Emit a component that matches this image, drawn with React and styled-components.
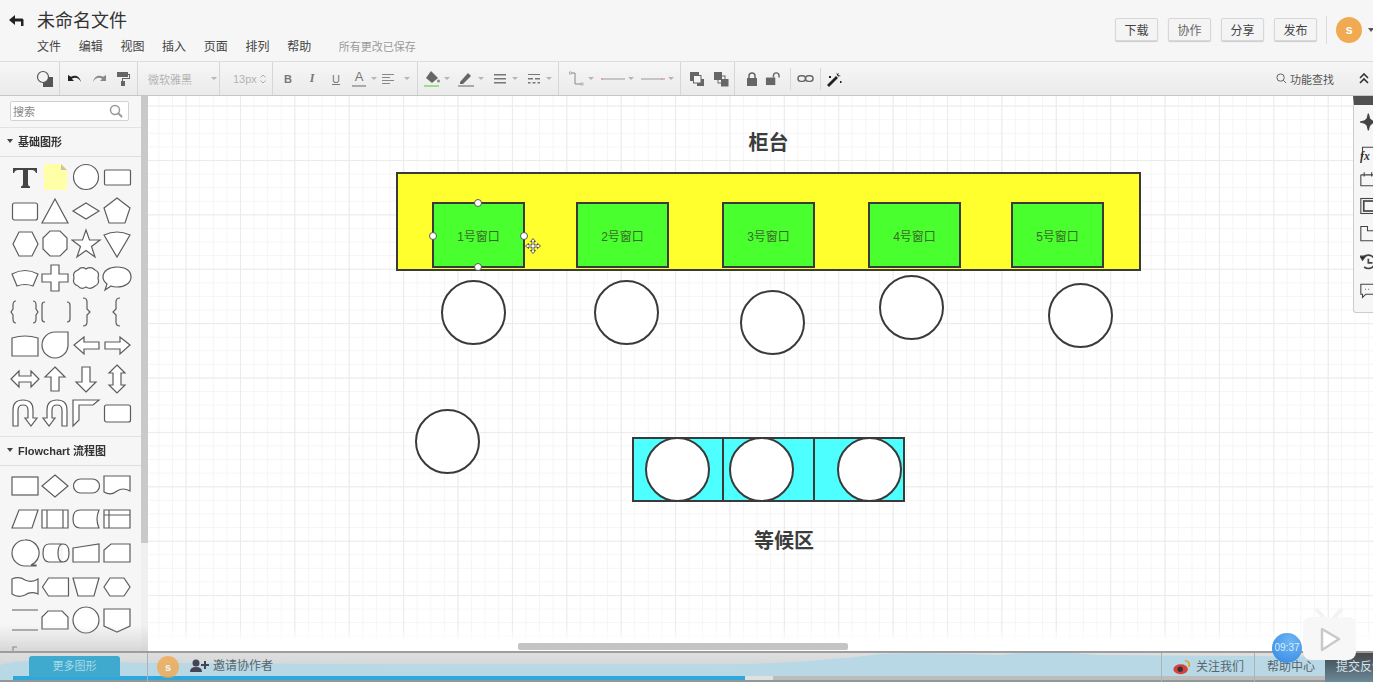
import React from 'react'
import styled, { createGlobalStyle } from 'styled-components'

const CJK = `"Liberation Sans", "Noto Sans CJK SC", sans-serif`

const Global = createGlobalStyle`
  html, body { margin: 0; padding: 0; background: #fff; }
  * { box-sizing: border-box; }
  body { font-family: ${CJK}; }
`

const Page = styled.div`
  position: relative;
  width: 1373px;
  height: 682px;
  overflow: hidden;
  display: flex;
  flex-direction: column;
  filter: blur(0.45px);
`

/* header */
const Header = styled.header`
  height: 62px;
  flex: none;
  display: flex;
  justify-content: space-between;
  background: #f6f6f6;
  border-bottom: 1px solid #dcdcdc;
`
const HeaderLeft = styled.div`
  display: flex;
  padding: 8px 0 0 9px;
`
const Back = styled.svg`
  width: 15px;
  height: 11px;
  margin: 7px 13px 0 0;
`
const Title = styled.div`
  font-size: 18px;
  line-height: 26px;
  color: #333;
`
const MenuBar = styled.nav`
  display: flex;
  align-items: center;
  margin-top: 5px;
  font-size: 12px;
  line-height: 16px;
  color: #444;
`
const MenuItem = styled.span`
  width: 41.7px;
`
const Saved = styled.span`
  margin-left: 8px;
  font-size: 11px;
  color: #9a9a9a;
  padding-left: 2px;
`
const HeaderRight = styled.div`
  display: flex;
  align-items: center;
  padding: 0 0 2px 0;
`
const Btn = styled.button`
  width: 43px;
  height: 23px;
  margin-right: 10px;
  padding: 0;
  font: 12px ${CJK};
  color: ${p => p.$color || '#444'};
  background: #f4f4f4;
  border: 1px solid #d8d8d8;
  border-radius: 2px;
  box-shadow: 0 1px 1px #ccc;
`
const VSep = styled.div`
  width: 1px;
  height: 28px;
  background: #ddd;
  margin: 0 9px 0 -1px;
`
const Avatar = styled.div`
  width: ${p => p.$d}px;
  height: ${p => p.$d}px;
  border-radius: 50%;
  flex: none;
  background: #f2aa52;
  color: #fff;
  font-size: ${p => p.$d * 0.5}px;
  font-weight: 700;
  text-align: center;
  line-height: ${p => p.$d}px;
  opacity: ${p => p.$fade || 1};
`
const AvatarCaret = styled.div`
  width: 0;
  height: 0;
  margin-left: 6px;
  margin-right: -1px;
  border: 3.5px solid transparent;
  border-top: 4px solid #555;
  border-bottom: 0;
`

/* toolbar */
const Toolbar = styled.div`
  height: 34px;
  flex: none;
  display: flex;
  align-items: stretch;
  background: linear-gradient(#f6f6f6, #ebebeb);
  border-bottom: 1px solid #c6c6c6;
`
const Group = styled.div`
  width: ${p => p.$w}px;
  flex: none;
  display: flex;
  align-items: center;
  gap: ${p => p.$gap || 0}px;
  padding-left: ${p => p.$pl || 0}px;
  border-right: ${p => (p.$open ? 'none' : '1px solid #d6d6d6')};
`
const Tool = styled.div`
  width: ${p => p.$w || 24}px;
  height: 24px;
  flex: none;
  display: flex;
  align-items: center;
  justify-content: center;
  font: ${p => p.$font || '700 11px "Liberation Sans", sans-serif'};
  font-style: ${p => (p.$italic ? 'italic' : 'normal')};
  text-decoration: ${p => (p.$under ? 'underline' : 'none')};
  color: #777;
`
const Caret = styled.div`
  width: 8px;
  flex: none;
  margin-left: ${p => p.$ml || 0}px;
  display: flex;
  justify-content: center;
  &::after {
    content: '';
    border: 3px solid transparent;
    border-top: 3px solid #b5b5b5;
    border-bottom: 0;
  }
`
const Pair = styled.div`
  display: flex;
  align-items: center;
`
const FontName = styled.span`
  width: 62px;
  margin-left: 10px;
  font-size: 11px;
  color: #b4b4b4;
`
const FontSize = styled.span`
  margin-left: 13px;
  width: 27px;
  font: 11px "Liberation Sans", sans-serif;
  color: #b4b4b4;
`
const Spinner = styled.svg`
  width: 6px;
  height: 10px;
`
const Rule = styled.div`
  width: 1px;
  height: 22px;
  flex: none;
  margin: 0 ${p => p.$mr || 2}px 0 ${p => p.$ml || 7}px;
  background: #d8d8d8;
`
const FindBar = styled.div`
  flex: 1;
  display: flex;
  align-items: center;
  justify-content: flex-end;
  padding-right: 3px;
  font-size: 11px;
  color: #555;
`
const Collapse = styled.svg`
  width: 12px;
  height: 11px;
  margin-left: 24px;
`
const FindIcon = styled.svg`
  width: 11px;
  height: 11px;
  margin-right: 3px;
`
const UnderA = styled.span`
  border-bottom: 2px solid #aaa;
  padding: 0 3px 1px;
  font-weight: 400;
  font-size: 13px;
  line-height: 14px;
`

/* main */
const Main = styled.div`
  flex: 1;
  min-height: 0;
  display: flex;
`
const Sidebar = styled.aside`
  position: relative;
  height: 100%;
  width: 148px;
  flex: none;
  overflow: hidden;
  background: #f6f6f6;
  border-right: 7px solid #f0f0f0;
`
const SideScroll = styled.div`
  position: absolute;
  z-index: 2;
  left: 141px;
  top: 0;
  width: 7px;
  height: 447px;
  background: #c9c9c9;
`
const SideWrap = styled.div`
  position: relative;
  width: 148px;
  flex: none;
`
const SearchBox = styled.div`
  height: 31px;
  padding: 5px 0 0 10px;
`
const SearchField = styled.div`
  width: 119px;
  height: 20px;
  display: flex;
  align-items: center;
  justify-content: space-between;
  padding: 0 5px 0 2px;
  background: #fff;
  border: 1px solid #d2d2d2;
  border-radius: 2px;
  font-size: 11px;
  color: #888;
`
const SectionHead = styled.div`
  height: 30px;
  display: flex;
  align-items: center;
  gap: 5px;
  padding: 0 0 2px 7px;
  border-top: 1px solid #e2e2e2;
  border-bottom: 1px solid #dedede;
  font: 700 11px ${CJK};
  color: #333;
  &::before {
    content: '';
    border: 3px solid transparent;
    border-top: 4px solid #444;
    border-bottom: 0;
  }
`
const Shapes = styled.div`
  display: grid;
  grid-template-columns: repeat(4, 30.8px);
  grid-auto-rows: 33.7px;
  padding: 3px 0 6px 9.5px;
`
const Cell = styled.svg`
  width: 30.8px;
  height: 33.7px;
  fill: ${p => (p.$bare ? 'none' : '#fff')};
  stroke: ${p => (p.$bare ? 'none' : '#5c5c5c')};
  stroke-width: 1.2;
`
const SideFade = styled.div`
  position: absolute;
  z-index: 3;
  left: 0;
  right: 0;
  bottom: 0;
  height: 26px;
  background: linear-gradient(rgba(200, 200, 200, 0), rgba(190, 190, 190, 0.55));
`

/* canvas */
const Canvas = styled.main`
  position: relative;
  flex: 1;
  overflow: hidden;
  background-color: #fff;
  background-image:
    linear-gradient(#ebebeb 1px, transparent 1px),
    linear-gradient(90deg, #ebebeb 1px, transparent 1px),
    linear-gradient(#f5f5f5 1px, transparent 1px),
    linear-gradient(90deg, #f5f5f5 1px, transparent 1px);
  background-size: 54.4px 54.4px, 54.4px 54.4px, 13.6px 13.6px, 13.6px 13.6px;
  background-position: 0 9.6px, 37.6px 0, 0 9.6px, 37.6px 0;
`
const CanvasFade = styled.div`
  position: absolute;
  left: 0;
  right: 0;
  bottom: 0;
  height: 24px;
  background: linear-gradient(rgba(255, 255, 255, 0), #fff 65%);
`
const Shape = styled.div`
  position: absolute;
  left: ${p => p.$x - 148}px;
  top: ${p => p.$y - 96}px;
  width: ${p => p.$w}px;
  height: ${p => p.$h}px;
  display: flex;
  align-items: center;
  justify-content: center;
  background: ${p => p.$bg};
  border: 2px solid #3a3a3a;
  border-radius: ${p => (p.$round ? '50%' : '0')};
  font-size: 12px;
  color: #3a6a2a;
`
const Label = styled.div`
  position: absolute;
  left: ${p => p.$x - 148}px;
  top: ${p => p.$y - 96}px;
  transform: translate(-50%, -50%);
  font: 700 20px ${CJK};
  color: #3c3c3c;
  white-space: nowrap;
`
const Handle = styled.div`
  position: absolute;
  left: ${p => p.$x - 148 - 4}px;
  top: ${p => p.$y - 96 - 4}px;
  width: 8px;
  height: 8px;
  background: #fff;
  border: 1px solid #555;
  border-radius: 50%;
`
const MoveCursor = styled.svg`
  position: absolute;
  left: ${533 - 148 - 8}px;
  top: ${246 - 96 - 8}px;
  width: 16px;
  height: 16px;
`
const HScroll = styled.div`
  position: absolute;
  left: ${518 - 148}px;
  bottom: 1px;
  width: 330px;
  height: 7px;
  border-radius: 2px;
  background: #c4c4c4;
`
const RightPanel = styled.div`
  position: absolute;
  right: 0;
  top: 0;
  width: 20px;
  height: 217px;
  background: #f6f6f6;
  border-left: 1px solid #ccc;
  border-bottom: 1px solid #ccc;
  border-bottom-left-radius: 3px;
  border-top: 9px solid #505050;
  display: flex;
  flex-direction: column;
  padding: 7px 0 0 6px;
  overflow: hidden;
`
const PanelIcon = styled.svg`
  width: 20px;
  height: 20px;
  flex: none;
  margin-bottom: ${p => p.$mb}px;
  fill: none;
  stroke: #444;
  stroke-width: 1.3;
`

/* footer */
const Footer = styled.footer`
  position: relative;
  height: 31px;
  flex: none;
  display: flex;
  overflow: hidden;
  border-top: 2px solid #9d9d9d;
  background: linear-gradient(#dedede, #d4d8da 40%, #c8d4d8);
`
const Wave = styled.svg`
  position: absolute;
  left: 0;
  top: 0;
  width: 1373px;
  height: 29px;
`
const Progress = styled.div`
  position: absolute;
  left: 0;
  top: 23px;
  width: 100%;
  height: 6px;
  background: linear-gradient(90deg, transparent 13px, #bcbcbc 13px, #bcbcbc 100%);
  border-bottom: 2px solid #8f9a96;
  &::before {
    content: '';
    position: absolute;
    left: 745px;
    width: 28px;
    height: 4px;
    background: #e0e0e0;
  }
  &::after {
    content: '';
    position: absolute;
    left: 13px;
    width: 732px;
    height: 4px;
    background: #2fa6dc;
  }
`
const FootCell = styled.div`
  position: relative;
  width: ${p => p.$w}px;
  flex: ${p => (p.$grow ? 1 : 'none')};
  height: 100%;
  display: flex;
  align-items: flex-start;
  padding: ${p => p.$pad || '4px 0 0 0'};
  gap: ${p => p.$gap || 0}px;
  border-right: 1px solid ${p => (p.$noline ? 'transparent' : '#a9b4b8')};
  font-size: 12px;
  line-height: 20px;
  color: #56666e;
`
const MoreBtn = styled.div`
  width: 91px;
  height: 21px;
  margin: -1px 0 0 29px;
  background: #3fa9ce;
  border-radius: 3px 3px 0 0;
  color: #a9dbe8;
  font-size: 11px;
  line-height: 21px;
  text-align: center;
`
const InviteText = styled.span`
  margin-left: -6px;
`
const Feedback = styled.div`
  position: relative;
  width: 48px;
  height: 100%;
  flex: none;
  padding: 4px 0 0 11px;
  background: linear-gradient(#4a4a4a, #50606a 40%, #6c8a98);
  color: #d6e2e8;
  font-size: 12px;
  line-height: 20px;
  white-space: nowrap;
  overflow: hidden;
`
const Clock = styled.div`
  position: absolute;
  left: 1272px;
  top: 633px;
  width: 30px;
  height: 30px;
  border-radius: 50%;
  background: radial-gradient(circle at 60% 30%, #6fb6f4, #2f86e6);
  color: #dcecfb;
  font: 10px/30px "Liberation Sans", sans-serif;
  text-align: center;
`
const PlayBadge = styled.svg`
  position: absolute;
  left: 1300px;
  top: 606px;
  width: 58px;
  height: 56px;
`

const Ic = styled.svg`
  width: ${p => p.$s || 16}px;
  height: ${p => p.$s || 16}px;
  margin-top: ${p => p.$mt || 0}px;
  flex: none;
  fill: ${p => p.$fill || '#666'};
  stroke: none;
`

const menus = ['文件', '编辑', '视图', '插入', '页面', '排列', '帮助']

const basic = [
  <circle cx="15" cy="17" r="12.5" />,
  <rect x="2.5" y="10" width="26" height="15" rx="1" />,
  <rect x="2.5" y="9" width="25" height="17" rx="2" />,
  <path d="M15 5 L28 29 L2 29Z" />,
  <path d="M15 9 L28 17 L15 25 L2 17Z" />,
  <path d="M15 4 L28 14 L23 29 L7 29 L2 14Z" />,
  <path d="M9 5 H22 L28 17 L22 29 H9 L3 17Z" />,
  <path d="M10 4 H20 L27 11 V22 L20 29 H10 L3 22 V11Z" />,
  <path d="M15 3 L18.5 13 H29 L20.5 19.5 L24 30 L15 23.5 L6 30 L9.5 19.5 L1 13 H11.5Z" />,
  <path d="M2 8 Q15 2 28 8 L15 30Z" />,
  <path d="M2 13 Q15 6 28 13 L23 25 Q15 22 7 25Z" />,
  <path d="M11 4 H19 V13 H28 V21 H19 V30 H11 V21 H2 V13 H11Z" />,
  <path d="M7 9 Q11 5 15 8 Q20 5 24 9 Q29 11 27 17 Q29 23 24 25 Q20 29 15 26 Q10 29 7 25 Q1 23 3 17 Q1 11 7 9Z" />,
  <path d="M15 6 C24 6 29 10 29 16 C29 22 23 26 15 26 Q11 26 9 25 L3 29 L5 23 Q1 20 1 16 C1 10 7 6 15 6Z" />,
  <path d="M6 6 Q3 6 3 10 V14 L1 17 L3 20 V24 Q3 28 6 28 M23 6 Q26 6 26 10 V14 L28 17 L26 20 V24 Q26 28 23 28" fill="none" />,
  <path d="M5 7 Q2 7 2 10 V24 Q2 27 5 27 M27 7 Q30 7 30 10 V24 Q30 27 27 27" fill="none" />,
  <path d="M12 3 Q16 3 16 7 V14 L19 17 L16 20 V27 Q16 31 12 31" fill="none" />,
  <path d="M18 3 Q14 3 14 7 V14 L11 17 L14 20 V27 Q14 31 18 31" fill="none" />,
  <path d="M2 10 Q15 6 28 10 V28 H2Z" />,
  <path d="M28 4 V17 A13 13 0 1 1 15 4Z" />,
  <path d="M3 17 L13 9 V14 H28 V21 H13 V26Z" />,
  <path d="M28 17 L18 9 V14 H3 V21 H18 V26Z" />,
  <path d="M1 17 L9 9 V14 H21 V9 L29 17 L21 25 V20 H9 V25Z" />,
  <path d="M15 5 L25 15 H19 V29 H11 V15 H5Z" />,
  <path d="M15 30 L25 20 H19 V5 H11 V20 H5Z" />,
  <path d="M15 3 L23 11 H19 V23 H23 L15 31 L7 23 H11 V11 H7Z" />,
  <path d="M3 30 V14 Q3 4 13 4 Q23 4 23 14 V22 H27 L21 30 L15 22 H18 V14 Q18 9 13 9 Q8 9 8 14 V30Z" />,
  <path d="M27 30 V14 Q27 4 17 4 Q7 4 7 14 V22 H3 L9 30 L15 22 H12 V14 Q12 9 17 9 Q22 9 22 14 V30Z" />,
  <path d="M2 30 V4 H28 L22 9 H8 V24Z" />,
  <rect x="2.5" y="9" width="26" height="17" rx="2" />,
]

const flow = [
  <rect x="2" y="8" width="26" height="18" />,
  <path d="M15 6 L28 17 L15 28 L2 17Z" />,
  <rect x="2.5" y="10" width="26" height="14" rx="7" />,
  <path d="M2 7 H28 V22 Q21 18 15 22 Q9 27 2 23Z" />,
  <path d="M9 8 H28 L22 26 H2Z" />,
  <path d="M2 8 H28 V26 H2Z M7 8 V26 M23 8 V26" />,
  <path d="M9 8 H28 Q24 17 28 26 H9 Q2 26 2 17 Q2 8 9 8Z" />,
  <path d="M2 8 H28 V26 H2Z M7 8 V26 M2 13 H28" />,
  <path d="M15 4 A13 13 0 1 0 15 30 H26 V29 H21 A13 13 0 0 0 15 4Z" />,
  <path d="M8 8 H22 Q28 8 28 17 Q28 26 22 26 H8 Q2 26 2 17 Q2 8 8 8Z M22 8 Q17 8 17 17 Q17 26 22 26" transform="translate(1 0)" />,
  <path d="M2 12 L28 8 V26 H2Z" />,
  <path d="M9 8 H28 V26 H2 V14Z" />,
  <path d="M2 9 Q9 6 15 10 Q22 13 28 9 V24 Q21 21 15 25 Q8 28 2 24Z" />,
  <path d="M8 8 H28 V26 H8 L2 17Z" transform="translate(0.5 0)" />,
  <path d="M2 8 H28 L23 26 H7Z" />,
  <path d="M8 8 H22 L28 17 L22 26 H8 L2 17Z" />,
  <path d="M2 7 H28 M2 27 H28" fill="none" />,
  <path d="M8 8 H22 L28 14 V26 H2 V14Z" />,
  <circle cx="15" cy="17" r="13" />,
  <path d="M2 6 H28 V23 L15 29 L2 23Z" />,
  <path d="M3 17 V10 H7" fill="none" />,
]

const Tee = () => (
  <Cell $bare viewBox="0 0 30.8 33.7">
    <path d="M3 8 H27 V13 H26 Q25 10 22 10 H18 V24 Q18 26 20 26.5 V28 H11 V26.5 Q13 26 13 24 V10 H8 Q5 10 4 13 H3Z" fill="#444" />
  </Cell>
)
const Note = () => (
  <Cell $bare viewBox="0 0 30.8 33.7">
    <path d="M4 4 H21 L27 10 V30 H4Z" fill="#ffffa8" />
    <path d="M21 4 L27 10 H21Z" fill="#c8c89a" />
  </Cell>
)

const Grid = ({ items, head }) => (
  <Shapes>
    {head}
    {items.map((s, i) => (
      <Cell key={i} viewBox="0 0 30.8 33.7">
        {s}
      </Cell>
    ))}
  </Shapes>
)

const greens = [432, 576, 722, 868, 1011]
const seats = [
  [441, 280],
  [594, 280],
  [740, 290],
  [879, 275],
  [1048, 283],
  [415, 409],
]
const waiting = [645, 729, 837]

const panelIcons = [
  { mb: 11, d: <g><path d="M10 0 L12 8 L20 10 L12 12 L10 20 L8 12 L0 10 L8 8Z" fill="#444" /><circle cx="10" cy="10" r="4" fill="#444" /></g> },
  { mb: 6, d: <g><path d="M3 15 V3 H20" /><text x="0" y="18" fontSize="14" fontStyle="italic" fontFamily="Liberation Serif" fontWeight="700" fill="#333" stroke="none">fx</text></g> },
  { mb: 7, d: <path d="M1 5 H20 M1 5 V18 H20 M5 2 V7 M14 2 V7" /> },
  { mb: 8, d: <g><rect x="1" y="1" width="22" height="18" /><rect x="4.5" y="4" width="18" height="12" strokeWidth="2" /></g> },
  { mb: 8, d: <path d="M20 18 H1 V1 H9 V6 H20" /> },
  { mb: 8, d: <g><path d="M3 6 A8 8 0 1 1 5 16" strokeWidth="2" /><path d="M0 3 L7 3 L3 8Z" fill="#222" /><path d="M10 6 V11 H15" strokeWidth="2" /></g> },
  { mb: 0, d: <path d="M20 3 H1 V15 H3 V19 L7 15 H20 M6 9 H7 M10 9 H11" /> },
]

export default function App() {
  return (
    <Page>
      <Global />
      <Header>
        <HeaderLeft>
          <Back viewBox="0 0 15 11">
            <path d="M6 0 L0 5 L6 10 V6.5 H12 V11 H14.5 V5 Q14.5 3.5 13 3.5 H6Z" fill="#222" />
          </Back>
          <div>
            <Title>未命名文件</Title>
            <MenuBar>
              {menus.map(m => (
                <MenuItem key={m}>{m}</MenuItem>
              ))}
              <Saved>所有更改已保存</Saved>
            </MenuBar>
          </div>
        </HeaderLeft>
        <HeaderRight>
          <Btn>下载</Btn>
          <Btn $color="#666">协作</Btn>
          <Btn>分享</Btn>
          <Btn>发布</Btn>
          <VSep />
          <Avatar $d={26}>s</Avatar>
          <AvatarCaret />
        </HeaderRight>
      </Header>

      <Toolbar>
        <Group $w={60} $pl={33}>
          <Tool>
            <Ic viewBox="0 0 18 18" $s={18}>
              <rect x="7" y="7" width="10" height="10" fill="#555" />
              <circle cx="7" cy="7" r="5.5" fill="#f4f4f4" stroke="#555" strokeWidth="1.2" />
            </Ic>
          </Tool>
        </Group>
        <Group $w={78} $pl={3}>
          <Tool>
            <Ic viewBox="0 0 16 12" $fill="#222">
              <path d="M1 2 V8 H7 L4.8 5.8 C8 3.8 11.5 4.5 14 9 C13 4 9 1 4 3.8 Z" />
            </Ic>
          </Tool>
          <Tool>
            <Ic viewBox="0 0 16 12" $fill="#888">
              <path d="M15 2 V8 H9 L11.2 5.8 C8 3.8 4.5 4.5 2 9 C3 4 7 1 12 3.8 Z" />
            </Ic>
          </Tool>
          <Tool>
            <Ic viewBox="0 0 16 16" $fill="#666">
              <path d="M2 1 H13 V6 H2Z M13 3 H15 V8 H8 V10 H10 V15 H6 V10 H7 V7 H14 V4 H13Z" />
            </Ic>
          </Tool>
        </Group>
        <Group $w={82}>
          <FontName>微软雅黑</FontName>
          <Caret />
        </Group>
        <Group $w={53}>
          <FontSize>13px</FontSize>
          <Spinner viewBox="0 0 6 10">
            <path d="M0.5 3.5 L3 1 L5.5 3.5 M0.5 6.5 L3 9 L5.5 6.5" fill="none" stroke="#aaa" />
          </Spinner>
        </Group>
        <Group $w={145} $pl={3}>
          <Tool>B</Tool>
          <Tool $italic $font='700 12px "Liberation Serif", serif'>I</Tool>
          <Tool $under $font='400 11px "Liberation Sans", sans-serif'>U</Tool>
          <Tool $w={22}>
            <UnderA>A</UnderA>
          </Tool>
          <Caret />
          <Tool $w={20}>
            <Ic viewBox="0 0 14 12" $s={14} $fill="#888">
              <path d="M1 1 H13 V2 H1Z M1 4 H9 V5 H1Z M1 7 H13 V8 H1Z M1 10 H9 V11 H1Z" />
            </Ic>
          </Tool>
          <Caret $ml={5} />
        </Group>
        <Group $w={141} $pl={3} $gap={4}>
          <Pair>
            <Tool $w={22}>
              <Ic viewBox="0 0 18 18" $s={18}>
                <path d="M8 1 L15 8 L9 13 L3 8Z" fill="#666" />
                <circle cx="15.5" cy="11" r="1.5" fill="#888" />
                <rect x="1" y="15" width="15" height="2" fill="#9fdc8f" />
              </Ic>
            </Tool>
            <Caret />
          </Pair>
          <Pair>
            <Tool $w={22}>
              <Ic viewBox="0 0 18 18" $s={18}>
                <path d="M3 12 L11 3 L14 6 L6 14 H3Z" fill="#666" />
                <rect x="1" y="15" width="16" height="2" fill="#aaa" />
              </Ic>
            </Tool>
            <Caret />
          </Pair>
          <Pair>
            <Tool $w={22}>
              <Ic viewBox="0 0 14 12" $s={14} $fill="#777">
                <path d="M1 1 H13 V2.5 H1Z M1 5 H13 V6.5 H1Z M1 9 H13 V10.5 H1Z" />
              </Ic>
            </Tool>
            <Caret />
          </Pair>
          <Pair>
            <Tool $w={22}>
              <Ic viewBox="0 0 14 12" $s={14} $fill="#777">
                <path d="M1 1 H13 V2 H1Z M1 5 H6 V6.5 H1Z M8 5 H13 V6.5 H8Z M1 9 H3.5 V10.5 H1Z M5.5 9 H8.5 V10.5 H5.5Z M10.5 9 H13 V10.5 H10.5Z" />
              </Ic>
            </Tool>
            <Caret />
          </Pair>
        </Group>
        <Group $w={122} $pl={6} $gap={4}>
          <Pair>
            <Tool $w={22}>
              <Ic viewBox="0 0 16 16" $s={16}>
                <path d="M3 2 H7 V13 H13" fill="none" stroke="#888" />
                <rect x="1.5" y="1" width="2" height="2" fill="#fff" stroke="#888" strokeWidth="0.6" />
                <rect x="13" y="12" width="2" height="2" fill="#fff" stroke="#888" strokeWidth="0.6" />
              </Ic>
            </Tool>
            <Caret />
          </Pair>
          <Pair>
            <Tool $w={28}>
              <Ic viewBox="0 0 24 24" $s={24}>
                <rect x="0" y="11.5" width="24" height="1" fill="#999" />
                <rect x="0" y="11" width="2" height="2" fill="#e7a0b0" />
              </Ic>
            </Tool>
            <Caret />
          </Pair>
          <Pair>
            <Tool $w={28}>
              <Ic viewBox="0 0 24 24" $s={24}>
                <rect x="0" y="11.5" width="24" height="1" fill="#999" />
                <rect x="20" y="11" width="2" height="2" fill="#e7a0b0" />
              </Ic>
            </Tool>
            <Caret />
          </Pair>
        </Group>
        <Group $w={54} $pl={4}>
          <Tool>
            <Ic viewBox="0 0 16 16" $s={16}>
              <rect x="1" y="1" width="9" height="9" fill="#666" />
              <rect x="8" y="8" width="7" height="7" fill="#666" />
              <rect x="4.5" y="4.5" width="7.5" height="7.5" fill="#f4f4f4" stroke="#666" />
            </Ic>
          </Tool>
          <Tool>
            <Ic viewBox="0 0 16 16" $s={16}>
              <rect x="5" y="5" width="7" height="7" fill="#f4f4f4" stroke="#666" />
              <rect x="1" y="1" width="8" height="8" fill="#666" />
              <rect x="8" y="8" width="7.5" height="7.5" fill="#666" />
            </Ic>
          </Tool>
        </Group>
        <Group $w={130} $pl={6} $open>
          <Tool $w={21}>
            <Ic viewBox="0 0 12 14" $s={14}>
              <path d="M3 6 V4 A3 3 0 0 1 9 4 V6" fill="none" stroke="#666" strokeWidth="1.5" />
              <rect x="1" y="6" width="10" height="8" fill="#666" />
            </Ic>
          </Tool>
          <Tool $w={21}>
            <Ic viewBox="0 0 16 14" $s={15}>
              <path d="M9 6 V4 A3 3 0 0 1 15 4 V6" fill="none" stroke="#666" strokeWidth="1.5" />
              <rect x="1" y="6" width="10" height="8" fill="#666" />
            </Ic>
          </Tool>
          <Rule />
          <Tool>
            <Ic viewBox="0 0 18 10" $s={17}>
              <rect x="1" y="2" width="8" height="6" rx="3" fill="none" stroke="#666" strokeWidth="1.5" />
              <rect x="9" y="2" width="8" height="6" rx="3" fill="none" stroke="#666" strokeWidth="1.5" />
            </Ic>
          </Tool>
          <Rule $ml={3} $mr={1} />
          <Tool>
            <Ic viewBox="0 0 16 16" $s={16} $fill="#222">
              <path d="M1 14 L10 5 L12 7 L3 16Z" />
              <path d="M10 1 L11 3 L13 2 L12 4 L15 5 L12 5.5 L11 4Z M3 5 H5 V7 H3Z M14 10 H15.5 V12 H14Z" />
            </Ic>
          </Tool>
        </Group>
        <FindBar>
          <FindIcon viewBox="0 0 12 12">
            <circle cx="5" cy="5" r="4" fill="none" stroke="#555" />
            <path d="M8 8 L11 11" stroke="#555" />
          </FindIcon>
          功能查找
          <Collapse viewBox="0 0 12 11">
            <path d="M2 5 L6 1 L10 5 M2 10 L6 6 L10 10" fill="none" stroke="#333" strokeWidth="1.6" />
          </Collapse>
        </FindBar>
      </Toolbar>

      <Main>
        <SideWrap>
          <Sidebar>
            <SearchBox>
              <SearchField>
                搜索
                <Ic viewBox="0 0 14 14" $s={14}>
                  <circle cx="6" cy="6" r="4.5" fill="none" stroke="#999" strokeWidth="1.5" />
                  <path d="M9 9 L13 13" stroke="#999" strokeWidth="2" />
                </Ic>
              </SearchField>
            </SearchBox>
            <SectionHead>基础图形</SectionHead>
            <Grid
              head={
                <>
                  <Tee />
                  <Note />
                </>
              }
              items={basic}
            />
            <SectionHead>Flowchart 流程图</SectionHead>
            <Grid items={flow} />
          </Sidebar>
          <SideScroll />
          <SideFade />
        </SideWrap>

        <Canvas>
          <Label $x={768.5} $y={141}>柜台</Label>
          <Shape $x={396} $y={172} $w={745} $h={99} $bg="#ffff2e" />
          {greens.map((x, i) => (
            <Shape key={x} $x={x} $y={202} $w={93} $h={66} $bg="#4aff2e">
              {i + 1}号窗口
            </Shape>
          ))}
          {seats.map(([x, y]) => (
            <Shape key={x} $x={x} $y={y} $w={65} $h={65} $bg="#fff" $round />
          ))}
          <Shape $x={632} $y={437} $w={92} $h={65} $bg="#4dffff" />
          <Shape $x={722} $y={437} $w={93} $h={65} $bg="#4dffff" />
          <Shape $x={813} $y={437} $w={92} $h={65} $bg="#4dffff" />
          {waiting.map(x => (
            <Shape key={x} $x={x} $y={437} $w={65} $h={65} $bg="#fff" $round />
          ))}
          <Label $x={784} $y={539}>等候区</Label>
          <Handle $x={478} $y={203} />
          <Handle $x={433} $y={235.5} />
          <Handle $x={524} $y={235.5} />
          <Handle $x={478} $y={267} />
          <MoveCursor viewBox="0 0 16 16">
            <path d="M8 0.5 L10.5 3.5 H9 V7 H12.5 V5.5 L15.5 8 L12.5 10.5 V9 H9 V12.5 H10.5 L8 15.5 L5.5 12.5 H7 V9 H3.5 V10.5 L0.5 8 L3.5 5.5 V7 H7 V3.5 H5.5Z" fill="#fff" stroke="#333" strokeWidth="0.8" />
          </MoveCursor>
          <CanvasFade />
          <HScroll />
          <RightPanel>
            {panelIcons.map((ic, i) => (
              <PanelIcon key={i} viewBox="0 0 24 20" $mb={ic.mb}>
                {ic.d}
              </PanelIcon>
            ))}
          </RightPanel>
        </Canvas>
      </Main>

      <Footer>
        <Wave viewBox="0 0 1373 29" preserveAspectRatio="none">
          <path d="M0 12 Q20 6 60 8 L150 10 Q500 12 750 11 Q830 8 880 1 Q920 -1 1000 2 Q1040 -3 1100 2 L1373 4 V29 H0Z" fill="#b9d8e5" />
        </Wave>
        <Progress />
        <FootCell $w={148}>
          <MoreBtn>更多图形</MoreBtn>
        </FootCell>
        <FootCell $grow $pad="3px 0 0 9px" $gap={10}>
          <Avatar $d={22} $fade={0.8}>s</Avatar>
          <Ic viewBox="0 0 20 14" $s={20} $fill="#445">
            <circle cx="7" cy="4" r="3.5" />
            <path d="M1 13 Q1 8 7 8 Q13 8 13 13Z M15 2 H17 V5 H20 V7 H17 V10 H15 V7 H12 V5 H15Z" />
          </Ic>
          <InviteText>邀请协作者</InviteText>
        </FootCell>
        <FootCell $w={93} $pad="4px 0 0 11px" $gap={5}>
          <Ic viewBox="0 0 20 18" $s={18} $mt={1}>
            <ellipse cx="8.5" cy="11.5" rx="8" ry="5.5" fill="#d8403a" />
            <circle cx="8" cy="11.5" r="3" fill="#333" />
            <path d="M13 2 Q19 2 18 9" fill="none" stroke="#e8a020" strokeWidth="1.8" />
          </Ic>
          关注我们
        </FootCell>
        <FootCell $w={70} $pad="4px 0 0 12px" $noline>帮助中心</FootCell>
        <Feedback>提交反馈</Feedback>
      </Footer>

      <Clock>09:37</Clock>
      <PlayBadge viewBox="0 0 58 56">
        <path d="M17 4 L26 14 M41 4 L32 14" stroke="#f2f2f2" strokeWidth="4" strokeLinecap="round" />
        <rect x="3" y="11" width="53" height="43" rx="8" fill="#f7f7f7" />
        <path d="M22 23 L39 33 L22 44Z" fill="#fff" stroke="#c9c9c9" strokeWidth="2.5" strokeLinejoin="round" />
      </PlayBadge>
    </Page>
  )
}
